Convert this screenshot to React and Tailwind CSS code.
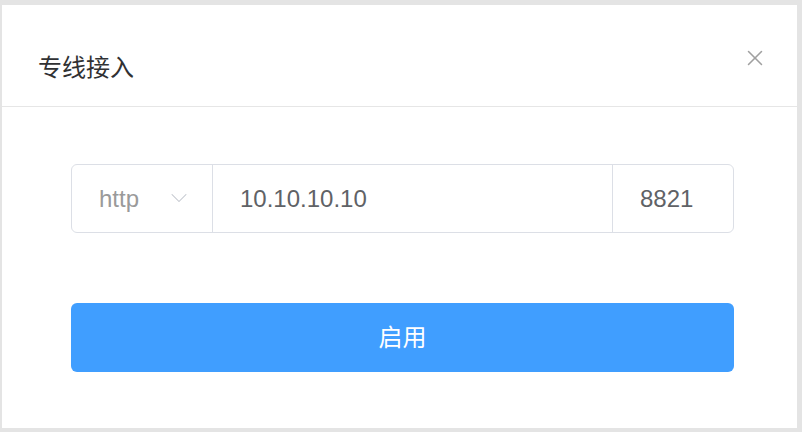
import { ChevronDown, X } from "lucide-react";

export default function App() {
  return (
    <div
      className="w-[802px] h-[432px] bg-[#e4e4e4] pl-[2px] pt-[5px] pr-[5px] pb-[4px]"
      style={{ fontFamily: '"Liberation Sans", "Noto Sans CJK SC", sans-serif' }}
    >
      <div className="h-full bg-white flex flex-col">
        <div className="h-[102px] flex items-start justify-between border-b border-[#e6e6e6] shrink-0">
          <h1 className="mt-[47px] ml-[36px] text-[24px] leading-[32px] text-[#303133]">专线接入</h1>
          <button className="mt-[40px] mr-[29px] text-[#a0a0a0]">
            <X size={26} strokeWidth={1.4} />
          </button>
        </div>

        <div className="pl-[69px] pr-[63px] pt-[57px]">
          <div className="flex h-[69px] rounded-[6px] border border-[#dcdfe6] text-[24px] overflow-hidden">
            <div className="w-[141px] flex items-center justify-between pl-[27px] pr-[19px] border-r border-[#dcdfe6] text-[#9a9a9a]">
              <span>http</span>
              <ChevronDown size={28} strokeWidth={0.9} className="text-[#c0c4cc] -mt-[2px]" />
            </div>
            <div className="flex-1 flex items-center pl-[27px] text-[#606266]">10.10.10.10</div>
            <div className="w-[121px] flex items-center pl-[27px] border-l border-[#dcdfe6] text-[#606266]">8821</div>
          </div>

          <button className="mt-[70px] w-full h-[69px] rounded-[6px] bg-[#409eff] text-white text-[24px]">
            启用
          </button>
        </div>
      </div>
    </div>
  );
}
